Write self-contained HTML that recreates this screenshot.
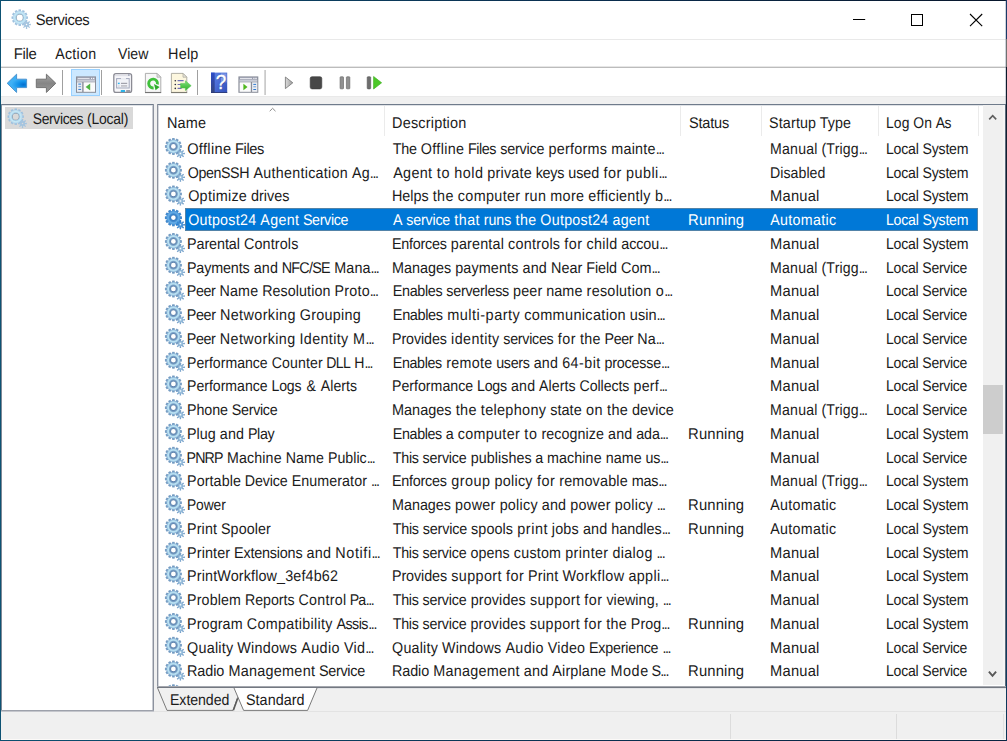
<!DOCTYPE html>
<html><head><meta charset="utf-8"><title>Services</title>
<style>
html,body{margin:0;padding:0;background:#fff;}
body{width:1007px;height:741px;position:relative;overflow:hidden;font-family:"Liberation Sans",sans-serif;font-size:15.5px;line-height:20px;}
.a{position:absolute;display:block;}
.t{position:absolute;display:block;white-space:nowrap;transform-origin:0 0;text-rendering:geometricPrecision;}
.e{letter-spacing:-1.5px;}
</style></head>
<body>
<svg width="0" height="0" style="position:absolute">
<defs>
<radialGradient id="gg" cx="9" cy="8.9" r="8.7" gradientUnits="userSpaceOnUse">
<stop offset="0.27" stop-color="#557aa6"/><stop offset="0.45" stop-color="#7aa2c8"/><stop offset="0.57" stop-color="#bce3f3"/><stop offset="0.68" stop-color="#b0d8ee"/><stop offset="0.76" stop-color="#8ab4d6"/><stop offset="0.84" stop-color="#7299c0"/><stop offset="1" stop-color="#7fa4c8"/>
</radialGradient>
<radialGradient id="ggl" cx="9" cy="8.9" r="8.6" gradientUnits="userSpaceOnUse">
<stop offset="0.37" stop-color="#76899c"/><stop offset="0.47" stop-color="#a6cde6"/><stop offset="0.6" stop-color="#c6e9f6"/><stop offset="0.76" stop-color="#b6d8ee"/><stop offset="0.85" stop-color="#9dbfdc"/><stop offset="1" stop-color="#a9c7e1"/>
</radialGradient>
<radialGradient id="gs" cx="16.0" cy="16.0" r="4.5" gradientUnits="userSpaceOnUse">
<stop offset="0.2" stop-color="#a3c8e2"/><stop offset="0.6" stop-color="#86aed2"/><stop offset="1" stop-color="#6f9bc6"/>
</radialGradient>
<symbol id="gearsel" viewBox="0 0 21 21"><path d="M18.62,15.34 L20.49,15.29 L20.49,16.71 L18.62,16.66 L18.32,17.39 L19.68,18.67 L18.67,19.68 L17.39,18.32 L16.66,18.62 L16.71,20.49 L15.29,20.49 L15.34,18.62 L14.61,18.32 L13.33,19.68 L12.32,18.67 L13.68,17.39 L13.38,16.66 L11.51,16.71 L11.51,15.29 L13.38,15.34 L13.68,14.61 L12.32,13.33 L13.33,12.32 L14.61,13.68 L15.34,13.38 L15.29,11.51 L16.71,11.51 L16.66,13.38 L17.39,13.68 L18.67,12.32 L19.68,13.33 L18.32,14.61ZM15.20,16.00 a0.8,0.8 0 1,0 1.6,0 a0.8,0.8 0 1,0 -1.6,0Z" fill="url(#gs)" fill-rule="evenodd"/><path d="M15.64,7.44 L17.52,7.72 L17.52,10.08 L15.64,10.36 L15.48,10.96 L16.97,12.13 L15.78,14.19 L14.02,13.48 L13.58,13.92 L14.29,15.68 L12.23,16.87 L11.06,15.38 L10.46,15.54 L10.18,17.42 L7.82,17.42 L7.54,15.54 L6.94,15.38 L5.77,16.87 L3.71,15.68 L4.42,13.92 L3.98,13.48 L2.22,14.19 L1.03,12.13 L2.52,10.96 L2.36,10.36 L0.48,10.08 L0.48,7.72 L2.36,7.44 L2.52,6.84 L1.03,5.67 L2.22,3.61 L3.98,4.32 L4.42,3.88 L3.71,2.12 L5.77,0.93 L6.94,2.42 L7.54,2.26 L7.82,0.38 L10.18,0.38 L10.46,2.26 L11.06,2.42 L12.23,0.93 L14.29,2.12 L13.58,3.88 L14.02,4.32 L15.78,3.61 L16.97,5.67 L15.48,6.84ZM6.60,8.90 a2.4,2.4 0 1,0 4.8,0 a2.4,2.4 0 1,0 -4.8,0Z" fill="url(#gg)" fill-rule="evenodd"/><path d="M18.62,15.34 L20.49,15.29 L20.49,16.71 L18.62,16.66 L18.32,17.39 L19.68,18.67 L18.67,19.68 L17.39,18.32 L16.66,18.62 L16.71,20.49 L15.29,20.49 L15.34,18.62 L14.61,18.32 L13.33,19.68 L12.32,18.67 L13.68,17.39 L13.38,16.66 L11.51,16.71 L11.51,15.29 L13.38,15.34 L13.68,14.61 L12.32,13.33 L13.33,12.32 L14.61,13.68 L15.34,13.38 L15.29,11.51 L16.71,11.51 L16.66,13.38 L17.39,13.68 L18.67,12.32 L19.68,13.33 L18.32,14.61ZM15.20,16.00 a0.8,0.8 0 1,0 1.6,0 a0.8,0.8 0 1,0 -1.6,0Z" fill="#0a74d8" fill-opacity=".5" fill-rule="evenodd"/><path d="M15.64,7.44 L17.52,7.72 L17.52,10.08 L15.64,10.36 L15.48,10.96 L16.97,12.13 L15.78,14.19 L14.02,13.48 L13.58,13.92 L14.29,15.68 L12.23,16.87 L11.06,15.38 L10.46,15.54 L10.18,17.42 L7.82,17.42 L7.54,15.54 L6.94,15.38 L5.77,16.87 L3.71,15.68 L4.42,13.92 L3.98,13.48 L2.22,14.19 L1.03,12.13 L2.52,10.96 L2.36,10.36 L0.48,10.08 L0.48,7.72 L2.36,7.44 L2.52,6.84 L1.03,5.67 L2.22,3.61 L3.98,4.32 L4.42,3.88 L3.71,2.12 L5.77,0.93 L6.94,2.42 L7.54,2.26 L7.82,0.38 L10.18,0.38 L10.46,2.26 L11.06,2.42 L12.23,0.93 L14.29,2.12 L13.58,3.88 L14.02,4.32 L15.78,3.61 L16.97,5.67 L15.48,6.84ZM6.60,8.90 a2.4,2.4 0 1,0 4.8,0 a2.4,2.4 0 1,0 -4.8,0Z" fill="#0a74d8" fill-opacity=".5" fill-rule="evenodd"/></symbol>
<symbol id="gearl" viewBox="0 0 21 21"><path d="M18.62,15.34 L20.49,15.29 L20.49,16.71 L18.62,16.66 L18.32,17.39 L19.68,18.67 L18.67,19.68 L17.39,18.32 L16.66,18.62 L16.71,20.49 L15.29,20.49 L15.34,18.62 L14.61,18.32 L13.33,19.68 L12.32,18.67 L13.68,17.39 L13.38,16.66 L11.51,16.71 L11.51,15.29 L13.38,15.34 L13.68,14.61 L12.32,13.33 L13.33,12.32 L14.61,13.68 L15.34,13.38 L15.29,11.51 L16.71,11.51 L16.66,13.38 L17.39,13.68 L18.67,12.32 L19.68,13.33 L18.32,14.61ZM15.20,16.00 a0.8,0.8 0 1,0 1.6,0 a0.8,0.8 0 1,0 -1.6,0Z" fill="#a4c4df" fill-rule="evenodd"/><path d="M15.64,7.44 L17.52,7.72 L17.52,10.08 L15.64,10.36 L15.48,10.96 L16.97,12.13 L15.78,14.19 L14.02,13.48 L13.58,13.92 L14.29,15.68 L12.23,16.87 L11.06,15.38 L10.46,15.54 L10.18,17.42 L7.82,17.42 L7.54,15.54 L6.94,15.38 L5.77,16.87 L3.71,15.68 L4.42,13.92 L3.98,13.48 L2.22,14.19 L1.03,12.13 L2.52,10.96 L2.36,10.36 L0.48,10.08 L0.48,7.72 L2.36,7.44 L2.52,6.84 L1.03,5.67 L2.22,3.61 L3.98,4.32 L4.42,3.88 L3.71,2.12 L5.77,0.93 L6.94,2.42 L7.54,2.26 L7.82,0.38 L10.18,0.38 L10.46,2.26 L11.06,2.42 L12.23,0.93 L14.29,2.12 L13.58,3.88 L14.02,4.32 L15.78,3.61 L16.97,5.67 L15.48,6.84ZM5.80,8.90 a3.2,3.2 0 1,0 6.4,0 a3.2,3.2 0 1,0 -6.4,0Z" fill="url(#ggl)" fill-rule="evenodd"/></symbol>
<symbol id="gear" viewBox="0 0 21 21"><path d="M18.62,15.34 L20.49,15.29 L20.49,16.71 L18.62,16.66 L18.32,17.39 L19.68,18.67 L18.67,19.68 L17.39,18.32 L16.66,18.62 L16.71,20.49 L15.29,20.49 L15.34,18.62 L14.61,18.32 L13.33,19.68 L12.32,18.67 L13.68,17.39 L13.38,16.66 L11.51,16.71 L11.51,15.29 L13.38,15.34 L13.68,14.61 L12.32,13.33 L13.33,12.32 L14.61,13.68 L15.34,13.38 L15.29,11.51 L16.71,11.51 L16.66,13.38 L17.39,13.68 L18.67,12.32 L19.68,13.33 L18.32,14.61ZM15.20,16.00 a0.8,0.8 0 1,0 1.6,0 a0.8,0.8 0 1,0 -1.6,0Z" fill="url(#gs)" fill-rule="evenodd"/><path d="M15.64,7.44 L17.52,7.72 L17.52,10.08 L15.64,10.36 L15.48,10.96 L16.97,12.13 L15.78,14.19 L14.02,13.48 L13.58,13.92 L14.29,15.68 L12.23,16.87 L11.06,15.38 L10.46,15.54 L10.18,17.42 L7.82,17.42 L7.54,15.54 L6.94,15.38 L5.77,16.87 L3.71,15.68 L4.42,13.92 L3.98,13.48 L2.22,14.19 L1.03,12.13 L2.52,10.96 L2.36,10.36 L0.48,10.08 L0.48,7.72 L2.36,7.44 L2.52,6.84 L1.03,5.67 L2.22,3.61 L3.98,4.32 L4.42,3.88 L3.71,2.12 L5.77,0.93 L6.94,2.42 L7.54,2.26 L7.82,0.38 L10.18,0.38 L10.46,2.26 L11.06,2.42 L12.23,0.93 L14.29,2.12 L13.58,3.88 L14.02,4.32 L15.78,3.61 L16.97,5.67 L15.48,6.84ZM6.60,8.90 a2.4,2.4 0 1,0 4.8,0 a2.4,2.4 0 1,0 -4.8,0Z" fill="url(#gg)" fill-rule="evenodd"/></symbol>
</defs></svg>
<!-- base fills -->
<div class="a" style="left:0;top:0;width:1007px;height:741px;background:#fff"></div>
<!-- title/menu lines -->
<div class="a" style="left:1px;top:39px;width:1005px;height:1px;background:#e9e9e9"></div>
<div class="a" style="left:1px;top:66px;width:1005px;height:1px;background:#e6e6e6"></div>
<div class="a" style="left:1px;top:67px;width:1005px;height:1px;background:#bcbcbc"></div>
<!-- gray client background below toolbar -->
<div class="a" style="left:1px;top:96px;width:1005px;height:644px;background:#f0f0f0"></div>
<div class="a" style="left:1px;top:96px;width:1005px;height:1px;background:#e9e9e9"></div>
<!-- tree panel -->
<div class="a" style="left:1px;top:104px;width:153px;height:607px;background:#fff"></div>
<div class="a" style="left:1px;top:104px;width:153px;height:1px;background:#6f7b8b"></div>
<div class="a" style="left:2px;top:105px;width:150px;height:1px;background:#dfe2e6"></div>
<div class="a" style="left:1px;top:104px;width:1px;height:607px;background:#7f8896"></div>
<div class="a" style="left:152px;top:105px;width:1px;height:606px;background:#c9ccd2"></div>
<div class="a" style="left:153px;top:104px;width:1px;height:607px;background:#8c929e"></div>
<div class="a" style="left:1px;top:710px;width:153px;height:1px;background:#9da1ab"></div>
<div class="a" style="left:1px;top:711px;width:153px;height:1px;background:#c4c6cc"></div>
<div class="a" style="left:5px;top:107px;width:128.3px;height:21.8px;background:#d9d9d9"></div>
<!-- list panel -->
<div class="a" style="left:157px;top:104px;width:849px;height:584px;background:#fff"></div>
<div class="a" style="left:157px;top:104px;width:849px;height:1px;background:#6f7b8b"></div>
<div class="a" style="left:158px;top:105px;width:847px;height:1px;background:#dfe2e6"></div>
<div class="a" style="left:157px;top:104px;width:1px;height:584px;background:#8c929e"></div>
<div class="a" style="left:158px;top:105px;width:1px;height:582px;background:#d5d8dd"></div>
<div class="a" style="left:1005px;top:104px;width:1px;height:584px;background:#5b6b7d"></div>
<div class="a" style="left:157px;top:686px;width:849px;height:1px;background:#a4a7ae"></div>
<div class="a" style="left:157px;top:687px;width:849px;height:1px;background:#737881"></div>
<div class="a" style="left:157px;top:688px;width:849px;height:1px;background:#e2e3e6"></div>
<!-- header separators -->
<div class="a" style="left:384px;top:106px;width:1px;height:30px;background:#ebebeb"></div>
<div class="a" style="left:680px;top:106px;width:1px;height:30px;background:#ebebeb"></div>
<div class="a" style="left:761px;top:106px;width:1px;height:30px;background:#ebebeb"></div>
<div class="a" style="left:878px;top:106px;width:1px;height:30px;background:#ebebeb"></div>
<div class="a" style="left:978px;top:106px;width:1px;height:30px;background:#ebebeb"></div>
<!-- sort arrow -->
<svg class="a" style="left:268px;top:106px" width="10" height="7"><path d="M1.7,5.2 L4.6,2.3 L7.5,5.2" fill="none" stroke="#8a8a8a" stroke-width="1"/></svg>
<!-- selected row -->
<div class="a" style="left:185.2px;top:208.3px;width:793.1px;height:22.5px;background:#0078d7"></div>
<div class="a" style="left:185.2px;top:208.3px;width:793.1px;height:22.5px;box-sizing:border-box;border:1px solid rgba(150,140,130,.55)"></div>
<!-- scrollbar -->
<div class="a" style="left:983px;top:105px;width:22px;height:579.6px;background:#f5f5f5"></div>
<div class="a" style="left:983px;top:105px;width:20.2px;height:579.6px;background:#f0f0f0"></div>
<div class="a" style="left:983px;top:385px;width:20.2px;height:49px;background:#cdcdcd"></div>
<svg class="a" style="left:983px;top:105px" width="21" height="580"><path d="M6.2,14.4 L9.7,10.6 L13.2,14.4" fill="none" stroke="#5e5e5e" stroke-width="1.6"/><path d="M5.9,566.7 L9.5,570.9 L13.1,566.7" fill="none" stroke="#585858" stroke-width="1.9"/></svg>
<!-- tabs -->
<svg class="a" style="left:150px;top:686px" width="200" height="28">
<path d="M7.5,2 L17,24 L83,24 L87.6,11.5 L84,2 Z" fill="#f0f0f0"/>
<path d="M84,2 L93.6,24 L157.6,24 L167,2 Z" fill="#fff"/>
<path d="M7.6,2 L17,24.4 L83,24.4 L87.8,11.2" fill="none" stroke="#7a7a7a" stroke-width="1"/>
<path d="M84,2 L93.6,24.4 L157.6,24.4 L167,2" fill="none" stroke="#7a7a7a" stroke-width="1"/>
<path d="M83.4,24.2 L87.6,12.4" fill="none" stroke="#5a5a5a" stroke-width="1.6"/>
</svg>
<!-- status bar -->
<div class="a" style="left:1px;top:711px;width:1005px;height:1px;background:#e3e3e3"></div>
<div class="a" style="left:1px;top:711px;width:153px;height:1px;background:#c4c6cc"></div>
<div class="a" style="left:730px;top:714px;width:1px;height:26px;background:#dcdcdc"></div>
<div class="a" style="left:896px;top:714px;width:1px;height:26px;background:#dcdcdc"></div>
<div class="a" style="left:1003px;top:714px;width:1px;height:26px;background:#e2e2e2"></div>
<!-- window controls -->
<svg class="a" style="left:840px;top:0" width="166" height="39">
<path d="M13,19.5 H25.2" stroke="#000" stroke-width="1"/>
<rect x="71.5" y="14.5" width="11" height="11" fill="none" stroke="#000" stroke-width="1"/>
<path d="M130,14 L142.2,26.2 M142.2,14 L130,26.2" stroke="#000" stroke-width="1.1"/>
</svg>
<!-- window border -->
<div class="a" style="left:0;top:0;width:1007px;height:1px;background:linear-gradient(90deg,#0c4f70,#0a2d4e 60%,#08162b)"></div>
<div class="a" style="left:0;top:740px;width:1007px;height:1px;background:linear-gradient(90deg,#0c4f70,#0a3050 60%,#0a2340)"></div>
<div class="a" style="left:0;top:0;width:1px;height:741px;background:#0d5273"></div>
<div class="a" style="left:1px;top:739px;width:1005px;height:1px;background:#fcfaf8"></div>
<div class="a" style="left:1006px;top:0;width:1px;height:741px;background:linear-gradient(180deg,#1b3a68 0,#1b3a68 39px,#707070 39px,#707070 67px,#0a1628 67px,#131e30 104px,#131e30 420px,#113c60 660px,#0a3558 741px)"></div>
<div class="a" style="left:1005px;top:0;width:1px;height:104px;background:rgba(60,80,110,.25)"></div>

<svg class="a" style="left:0;top:68px" width="400" height="28" viewBox="0 68 400 28">
<defs>
<radialGradient id="gb" cx="23.5" cy="84.6" r="12" gradientUnits="userSpaceOnUse" gradientTransform="translate(0 84.6) scale(1 .55) translate(0 -84.6)"><stop offset="0" stop-color="#0570cf"/><stop offset=".45" stop-color="#1292ea"/><stop offset="1" stop-color="#3eb0f5"/></radialGradient>
<linearGradient id="gf" x1="0" y1="0" x2="0" y2="1"><stop offset="0" stop-color="#a9a9a9"/><stop offset=".5" stop-color="#858585"/><stop offset="1" stop-color="#9a9a9a"/></linearGradient>
<linearGradient id="gh" x1="0" y1="0" x2="1" y2="1"><stop offset="0" stop-color="#5f82e0"/><stop offset=".45" stop-color="#4a6ed8"/><stop offset="1" stop-color="#3350b8"/></linearGradient>
<linearGradient id="ghl" x1="0" y1="0" x2="0" y2="1"><stop offset="0" stop-color="#2c4cc8"/><stop offset="1" stop-color="#36467e"/></linearGradient>
<linearGradient id="gp" x1="0" y1="0" x2="1" y2="0"><stop offset="0" stop-color="#dcdcdc"/><stop offset="1" stop-color="#9c9c9c"/></linearGradient>
<linearGradient id="gg2" x1="0" y1="0" x2="0" y2="1"><stop offset="0" stop-color="#7fe07a"/><stop offset="1" stop-color="#2fb02a"/></linearGradient>
</defs>
<!-- back / forward -->
<path d="M7.2,83.3 L16.6,74.2 L16.6,79.2 L26.6,79.2 L26.6,87.6 L16.6,87.6 L16.6,92.4 Z" fill="url(#gb)" stroke="#4a93cf" stroke-width="1" stroke-linejoin="round"/>
<path d="M55.8,83.3 L46.4,74.2 L46.4,79.2 L36.3,79.2 L36.3,87.6 L46.4,87.6 L46.4,92.4 Z" fill="url(#gf)" stroke="#727272" stroke-width="1" stroke-linejoin="round"/>
<!-- separators -->
<rect x="62" y="70" width="1" height="25" fill="#a0a0a0"/>
<rect x="101" y="70" width="1" height="25" fill="#a0a0a0"/>
<rect x="197" y="70" width="1" height="25" fill="#a0a0a0"/>
<rect x="264.3" y="70" width="1.6" height="25" fill="#c6c6c6"/>
<!-- selected button -->
<rect x="71.5" y="69.5" width="28" height="26" fill="#cce8ff" stroke="#99d1ff" stroke-width="1"/>
<!-- icon1: console tree -->
<rect x="76" y="76.4" width="20" height="16.4" fill="#8a8e99"/>
<rect x="77" y="77.3" width="18" height="2.2" fill="#9a9eb0"/>
<rect x="77.6" y="77.9" width="12" height="0.9" fill="#f4f4f8"/>
<rect x="91" y="77.8" width="1.2" height="1.2" fill="#f4f4f8"/><rect x="93" y="77.8" width="1.4" height="1.2" fill="#f4f4f8"/>
<rect x="77" y="79.5" width="18" height="2.3" fill="#c9ccd7"/>
<rect x="77" y="82.3" width="5.2" height="9.5" fill="#eceef3"/>
<rect x="78.3" y="83.6" width="2.8" height="1" fill="#2f7ad0"/><rect x="78.3" y="86.2" width="2.8" height="1" fill="#6f9fd8"/><rect x="78.3" y="88.9" width="2.8" height="1" fill="#2f7ad0"/>
<rect x="83.6" y="82.3" width="11.4" height="9.5" fill="#fbfbfb"/>
<path d="M85.6,87 L90.2,83.4 L90.2,90.6 Z" fill="#4fb344"/>
<!-- icon2: properties -->
<rect x="113.8" y="73.6" width="17.8" height="18.8" rx="2.2" fill="#f6f6f9" stroke="#8b8b94" stroke-width="1.3"/>
<rect x="115" y="74.6" width="15.4" height="1.6" fill="#e0e1e8"/>
<rect x="128" y="74.4" width="1.6" height="1.2" fill="#8890a8"/>
<rect x="116.6" y="78.6" width="12.6" height="9.4" fill="#f2f3f8" stroke="#a3a8bc" stroke-width="1"/>
<rect x="121" y="78.1" width="5" height="1.2" fill="#f2f3f8"/>
<rect x="117.9" y="82.7" width="1.8" height="1.4" fill="#2fb4f0"/>
<rect x="121" y="82.8" width="6.2" height="1.1" fill="#9a9aa4"/>
<rect x="117.9" y="85.4" width="1.8" height="1.2" fill="#d0d2dc"/>
<rect x="121" y="85.4" width="6.2" height="1.1" fill="#a8a8b0"/>
<rect x="120.8" y="90" width="4.2" height="2" fill="#2db2e6"/>
<rect x="126.2" y="90" width="4" height="2" fill="#9c9ca4"/>
<!-- icon3: refresh -->
<path d="M145.4,73.4 H157 L160.8,77.2 V92.4 H145.4 Z" fill="#f7f7f7" stroke="#a6a6a6" stroke-width=".9"/>
<path d="M157,73.4 V77.2 H160.8 Z" fill="#e2e2e2" stroke="#a6a6a6" stroke-width=".7"/>
<path d="M145,92.6 H161.2" stroke="#6e6e6e" stroke-width="1"/>
<path d="M157.4,84.4 A4.4,4.4 0 1 0 153.6,87.9" fill="none" stroke="#3fc03a" stroke-width="2.9"/>
<path d="M154,84 L159.6,87 L155.6,90.2 Z" fill="#2cab2a"/>
<!-- icon4: export -->
<path d="M171.4,73.4 H183 L186.8,77.2 V92.4 H171.4 Z" fill="#fdf7df" stroke="#a9a79c" stroke-width=".9"/>
<path d="M183,73.4 V77.2 H186.8 Z" fill="#e8e6dc" stroke="#a9a79c" stroke-width=".7"/>
<path d="M171,92.6 H187.2" stroke="#77756c" stroke-width="1"/>
<circle cx="175.3" cy="80.7" r=".8" fill="#2a2a38"/><circle cx="175.3" cy="84.5" r=".8" fill="#2a2a38"/><circle cx="175.3" cy="88.4" r=".8" fill="#2a2a38"/>
<path d="M177.6,80.7 H183.6 M177.6,84.5 H181 M177.6,88.4 H181.6" stroke="#6d6db8" stroke-width="1.2"/>
<path d="M180.6,83.4 H185.4 V80.8 L191.2,85.7 L185.4,90.5 V88 H180.6 Z" fill="url(#gg2)" stroke="#4cc048" stroke-width=".5"/>
<!-- icon5: help -->
<rect x="211" y="72.6" width="16.2" height="20.3" fill="url(#gh)"/>
<rect x="211" y="72.6" width="3.7" height="20.3" fill="url(#ghl)"/>
<rect x="221" y="73.4" width="5.6" height="9" fill="#b8c8f4" opacity=".45"/><rect x="211" y="92" width="16.2" height=".9" fill="#2c3a78"/>
<text x="221.6" y="90.2" text-anchor="middle" font-family="Liberation Sans" font-size="20.4" fill="#25357a" opacity=".55" transform="translate(221.6 0) scale(.92 1) translate(-221.6 0)">?</text><text x="220.9" y="89.5" text-anchor="middle" font-family="Liberation Sans" font-size="20.4" fill="#fff" stroke="#fff" stroke-width=".35" transform="translate(220.9 0) scale(.92 1) translate(-220.9 0)">?</text>
<!-- icon6: action pane -->
<rect x="238.4" y="76.4" width="19.9" height="16.4" fill="#8a8e99"/>
<rect x="239.4" y="77.3" width="17.9" height="2.2" fill="#9a9eb0"/>
<rect x="240" y="77.9" width="12" height="0.9" fill="#f4f4f8"/>
<rect x="253.3" y="77.8" width="1.2" height="1.2" fill="#f4f4f8"/><rect x="255.3" y="77.8" width="1.4" height="1.2" fill="#f4f4f8"/>
<rect x="239.4" y="79.5" width="17.9" height="2.3" fill="#c9ccd7"/>
<rect x="239.6" y="82.3" width="11.2" height="9.5" fill="#fbfbfb"/>
<path d="M243.4,83.7 L247.5,87 L243.4,90.3 Z" fill="#4fb720"/>
<rect x="252.1" y="82.3" width="5.2" height="9.5" fill="#eceef3"/>
<rect x="253.3" y="83.9" width="2.8" height="1" fill="#2f7ad0"/><rect x="253.3" y="86.3" width="2.8" height="1" fill="#6f9fd8"/><rect x="253.3" y="89" width="2.8" height="1" fill="#2f7ad0"/>
<!-- play/stop/pause/resume -->
<path d="M285.4,77 L292.8,82.8 L285.4,88.6 Z" fill="url(#gp)" stroke="#7d7d7d" stroke-width=".9" stroke-linejoin="round"/>
<rect x="310.2" y="76.7" width="11.6" height="12.2" rx="1.8" fill="#474747" stroke="#3a3a3a" stroke-width=".6"/>
<rect x="340.1" y="76.8" width="3.4" height="12" rx=".6" fill="#909090" stroke="#6c6c6c" stroke-width=".7"/>
<rect x="346.4" y="76.8" width="3.4" height="12" rx=".6" fill="#909090" stroke="#6c6c6c" stroke-width=".7"/>
<rect x="367.2" y="76.7" width="3.5" height="12.2" rx=".8" fill="#6d6d6d" stroke="#555" stroke-width=".6"/>
<path d="M373.6,76.5 L381.6,82.8 L373.6,89 Z" fill="#4cc828" stroke="#3fb020" stroke-width=".7" stroke-linejoin="round"/>
</svg>

<div class="a" id="listclip" style="left:158px;top:105px;width:825px;height:580.6px;overflow:hidden">
<div class="a" style="left:-158px;top:-105px;width:1007px;height:741px">
<svg class="a" style="left:164px;top:137px" width="23" height="23"><use href="#gear" x="0" y="0" width="21" height="21" transform="translate(0.41 0.57) scale(1.0000)"/></svg>
<svg class="a" style="left:164px;top:161px" width="23" height="23"><use href="#gear" x="0" y="0" width="21" height="21" transform="translate(0.41 0.32) scale(1.0000)"/></svg>
<svg class="a" style="left:164px;top:185px" width="23" height="23"><use href="#gear" x="0" y="0" width="21" height="21" transform="translate(0.41 0.07) scale(1.0000)"/></svg>
<svg class="a" style="left:164px;top:208px" width="23" height="23"><use href="#gearsel" x="0" y="0" width="21" height="21" transform="translate(0.41 0.82) scale(1.0000)"/></svg>
<svg class="a" style="left:164px;top:232px" width="23" height="23"><use href="#gear" x="0" y="0" width="21" height="21" transform="translate(0.41 0.57) scale(1.0000)"/></svg>
<svg class="a" style="left:164px;top:256px" width="23" height="23"><use href="#gear" x="0" y="0" width="21" height="21" transform="translate(0.41 0.32) scale(1.0000)"/></svg>
<svg class="a" style="left:164px;top:280px" width="23" height="23"><use href="#gear" x="0" y="0" width="21" height="21" transform="translate(0.41 0.07) scale(1.0000)"/></svg>
<svg class="a" style="left:164px;top:303px" width="23" height="23"><use href="#gear" x="0" y="0" width="21" height="21" transform="translate(0.41 0.82) scale(1.0000)"/></svg>
<svg class="a" style="left:164px;top:327px" width="23" height="23"><use href="#gear" x="0" y="0" width="21" height="21" transform="translate(0.41 0.57) scale(1.0000)"/></svg>
<svg class="a" style="left:164px;top:351px" width="23" height="23"><use href="#gear" x="0" y="0" width="21" height="21" transform="translate(0.41 0.32) scale(1.0000)"/></svg>
<svg class="a" style="left:164px;top:375px" width="23" height="23"><use href="#gear" x="0" y="0" width="21" height="21" transform="translate(0.41 0.07) scale(1.0000)"/></svg>
<svg class="a" style="left:164px;top:398px" width="23" height="23"><use href="#gear" x="0" y="0" width="21" height="21" transform="translate(0.41 0.82) scale(1.0000)"/></svg>
<svg class="a" style="left:164px;top:422px" width="23" height="23"><use href="#gear" x="0" y="0" width="21" height="21" transform="translate(0.41 0.57) scale(1.0000)"/></svg>
<svg class="a" style="left:164px;top:446px" width="23" height="23"><use href="#gear" x="0" y="0" width="21" height="21" transform="translate(0.41 0.32) scale(1.0000)"/></svg>
<svg class="a" style="left:164px;top:470px" width="23" height="23"><use href="#gear" x="0" y="0" width="21" height="21" transform="translate(0.41 0.07) scale(1.0000)"/></svg>
<svg class="a" style="left:164px;top:493px" width="23" height="23"><use href="#gear" x="0" y="0" width="21" height="21" transform="translate(0.41 0.82) scale(1.0000)"/></svg>
<svg class="a" style="left:164px;top:517px" width="23" height="23"><use href="#gear" x="0" y="0" width="21" height="21" transform="translate(0.41 0.57) scale(1.0000)"/></svg>
<svg class="a" style="left:164px;top:541px" width="23" height="23"><use href="#gear" x="0" y="0" width="21" height="21" transform="translate(0.41 0.32) scale(1.0000)"/></svg>
<svg class="a" style="left:164px;top:565px" width="23" height="23"><use href="#gear" x="0" y="0" width="21" height="21" transform="translate(0.41 0.07) scale(1.0000)"/></svg>
<svg class="a" style="left:164px;top:588px" width="23" height="23"><use href="#gear" x="0" y="0" width="21" height="21" transform="translate(0.41 0.82) scale(1.0000)"/></svg>
<svg class="a" style="left:164px;top:612px" width="23" height="23"><use href="#gear" x="0" y="0" width="21" height="21" transform="translate(0.41 0.57) scale(1.0000)"/></svg>
<svg class="a" style="left:164px;top:636px" width="23" height="23"><use href="#gear" x="0" y="0" width="21" height="21" transform="translate(0.41 0.32) scale(1.0000)"/></svg>
<svg class="a" style="left:164px;top:660px" width="23" height="23"><use href="#gear" x="0" y="0" width="21" height="21" transform="translate(0.41 0.07) scale(1.0000)"/></svg>
<svg class="a" style="left:164px;top:683px" width="23" height="23"><use href="#gear" x="0" y="0" width="21" height="21" transform="translate(0.41 0.82) scale(1.0000)"/></svg>
</div></div>
<svg class="a" style="left:11px;top:9px" width="23" height="23"><use href="#gearl" x="0" y="0" width="21" height="21" transform="translate(0.00 0.00) scale(0.9714)"/></svg>
<svg class="a" style="left:7px;top:108px" width="23" height="23"><use href="#gearl" x="0" y="0" width="21" height="21" transform="translate(0.00 0.00) scale(0.9714)"/></svg>
<span class="t" style="left:35.93px;top:11.20px;color:#1b1b1b;transform:scaleX(0.9518)"><span style="letter-spacing:-0.42px;margin:0 0.21px 0 -0.21px">Services</span></span>
<span class="t" style="left:13.56px;top:44.90px;color:#1b1b1b;transform:scaleX(0.9576)"><span style="letter-spacing:-0.31px;margin:0 0.16px 0 -0.16px">File</span></span>
<span class="t" style="left:55.49px;top:44.90px;color:#1b1b1b;transform:scaleX(0.9169)"><span style="letter-spacing:0.33px;margin:0 -0.17px 0 0.17px">Action</span></span>
<span class="t" style="left:117.50px;top:44.90px;color:#1b1b1b;transform:scaleX(0.9107)"><span style="letter-spacing:0.03px;margin:0 -0.02px 0 0.02px">View</span></span>
<span class="t" style="left:167.79px;top:44.90px;color:#1b1b1b;transform:scaleX(0.9290)"><span style="letter-spacing:0.22px;margin:0 -0.11px 0 0.11px">Help</span></span>
<span class="t" style="left:33.12px;top:109.60px;color:#1b1b1b;transform:scaleX(0.8979)"><span style="letter-spacing:-0.42px;margin:0 0.21px 0 -0.21px">Services</span> <span style="letter-spacing:-0.25px;margin:0 0.13px 0 -0.13px">(Local)</span></span>
<span class="t" style="left:167.25px;top:113.60px;color:#1b1b1b;transform:scaleX(0.9315)"><span style="letter-spacing:0.15px;margin:0 -0.07px 0 0.07px">Name</span></span>
<span class="t" style="left:392.29px;top:113.60px;color:#1b1b1b;transform:scaleX(0.9324)"><span style="letter-spacing:0.20px;margin:0 -0.10px 0 0.10px">Description</span></span>
<span class="t" style="left:688.55px;top:113.60px;color:#1b1b1b;transform:scaleX(0.9355)"><span style="letter-spacing:-0.16px;margin:0 0.08px 0 -0.08px">Status</span></span>
<span class="t" style="left:769.06px;top:113.60px;color:#1b1b1b;transform:scaleX(0.9223)"><span style="letter-spacing:0.16px;margin:0 -0.08px 0 0.08px">Startup</span> <span style="letter-spacing:0.00px;margin:0 -0.00px 0 0.00px">Type</span></span>
<span class="t" style="left:886.36px;top:113.60px;color:#1b1b1b;transform:scaleX(0.8967)"><span style="letter-spacing:0.08px;margin:0 -0.04px 0 0.04px">Log</span> <span style="letter-spacing:0.14px;margin:0 -0.07px 0 0.07px">On</span> <span style="letter-spacing:-0.56px;margin:0 0.28px 0 -0.28px">As</span></span>
<span class="t" style="left:170.34px;top:691.20px;color:#1b1b1b;transform:scaleX(0.9134)"><span style="letter-spacing:-0.07px;margin:0 0.03px 0 -0.03px">Extended</span></span>
<span class="t" style="left:246.06px;top:691.20px;color:#1b1b1b;transform:scaleX(0.9260)"><span style="letter-spacing:0.03px;margin:0 -0.01px 0 0.01px">Standard</span></span>
<span class="t" style="left:187.49px;top:139.90px;color:#1b1b1b;transform:scaleX(0.9428)"><span style="letter-spacing:0.34px;margin:0 -0.17px 0 0.17px">Offline</span> <span style="letter-spacing:-0.45px;margin:0 0.23px 0 -0.23px">Files</span></span>
<span class="t" style="left:393.25px;top:139.90px;color:#1b1b1b;transform:scaleX(0.9255)"><span style="letter-spacing:-0.37px;margin:0 0.18px 0 -0.18px">The</span> <span style="letter-spacing:0.34px;margin:0 -0.17px 0 0.17px">Offline</span> <span style="letter-spacing:-0.45px;margin:0 0.23px 0 -0.23px">Files</span> <span style="letter-spacing:-0.21px;margin:0 0.10px 0 -0.10px">service</span> <span style="letter-spacing:0.28px;margin:0 -0.14px 0 0.14px">performs</span> <span style="letter-spacing:0.29px;margin:0 -0.14px 0 0.14px">mainte</span><span class="e">...</span></span>
<span class="t" style="left:770.35px;top:139.90px;color:#1b1b1b;transform:scaleX(0.9091)"><span style="letter-spacing:0.23px;margin:0 -0.11px 0 0.11px">Manual</span> <span style="letter-spacing:0.21px;margin:0 -0.10px 0 0.10px">(Trigg</span><span class="e">...</span></span>
<span class="t" style="left:886.33px;top:139.90px;color:#1b1b1b;transform:scaleX(0.9095)"><span style="letter-spacing:-0.21px;margin:0 0.10px 0 -0.10px">Local</span> <span style="letter-spacing:-0.25px;margin:0 0.12px 0 -0.12px">System</span></span>
<span class="t" style="left:188.03px;top:163.65px;color:#1b1b1b;transform:scaleX(0.9188)"><span style="letter-spacing:-0.44px;margin:0 0.22px 0 -0.22px">OpenSSH</span> <span style="letter-spacing:0.34px;margin:0 -0.17px 0 0.17px">Authentication</span> <span style="letter-spacing:0.31px;margin:0 -0.15px 0 0.15px">Ag</span><span class="e">...</span></span>
<span class="t" style="left:393.00px;top:163.65px;color:#1b1b1b;transform:scaleX(0.9291)"><span style="letter-spacing:0.35px;margin:0 -0.17px 0 0.17px">Agent</span> <span style="letter-spacing:0.88px;margin:0 -0.44px 0 0.44px">to</span> <span style="letter-spacing:0.54px;margin:0 -0.27px 0 0.27px">hold</span> <span style="letter-spacing:0.22px;margin:0 -0.11px 0 0.11px">private</span> <span style="letter-spacing:-0.32px;margin:0 0.16px 0 -0.16px">keys</span> <span style="letter-spacing:-0.06px;margin:0 0.03px 0 -0.03px">used</span> <span style="letter-spacing:0.57px;margin:0 -0.28px 0 0.28px">for</span> <span style="letter-spacing:0.52px;margin:0 -0.26px 0 0.26px">publi</span><span class="e">...</span></span>
<span class="t" style="left:770.34px;top:163.65px;color:#1b1b1b;transform:scaleX(0.9135)"><span style="letter-spacing:0.04px;margin:0 -0.02px 0 0.02px">Disabled</span></span>
<span class="t" style="left:886.33px;top:163.65px;color:#1b1b1b;transform:scaleX(0.9095)"><span style="letter-spacing:-0.21px;margin:0 0.10px 0 -0.10px">Local</span> <span style="letter-spacing:-0.25px;margin:0 0.12px 0 -0.12px">System</span></span>
<span class="t" style="left:187.55px;top:187.40px;color:#1b1b1b;transform:scaleX(0.9287)"><span style="letter-spacing:0.30px;margin:0 -0.15px 0 0.15px">Optimize</span> <span style="letter-spacing:-0.00px;margin:0 0.00px 0 -0.00px">drives</span></span>
<span class="t" style="left:392.30px;top:187.40px;color:#1b1b1b;transform:scaleX(0.9261)"><span style="letter-spacing:-0.03px;margin:0 0.01px 0 -0.01px">Helps</span> <span style="letter-spacing:0.37px;margin:0 -0.19px 0 0.19px">the</span> <span style="letter-spacing:0.40px;margin:0 -0.20px 0 0.20px">computer</span> <span style="letter-spacing:0.36px;margin:0 -0.18px 0 0.18px">run</span> <span style="letter-spacing:0.37px;margin:0 -0.19px 0 0.19px">more</span> <span style="letter-spacing:0.28px;margin:0 -0.14px 0 0.14px">efficiently</span> <span style="letter-spacing:0.71px;margin:0 -0.36px 0 0.36px">b</span><span class="e">...</span></span>
<span class="t" style="left:770.20px;top:187.40px;color:#1b1b1b;transform:scaleX(0.9474)"><span style="letter-spacing:0.23px;margin:0 -0.11px 0 0.11px">Manual</span></span>
<span class="t" style="left:886.33px;top:187.40px;color:#1b1b1b;transform:scaleX(0.9095)"><span style="letter-spacing:-0.21px;margin:0 0.10px 0 -0.10px">Local</span> <span style="letter-spacing:-0.25px;margin:0 0.12px 0 -0.12px">System</span></span>
<span class="t" style="left:187.60px;top:211.15px;color:#fff;transform:scaleX(0.9193)"><span style="letter-spacing:0.30px;margin:0 -0.15px 0 0.15px">Outpost24</span> <span style="letter-spacing:0.35px;margin:0 -0.17px 0 0.17px">Agent</span> <span style="letter-spacing:-0.34px;margin:0 0.17px 0 -0.17px">Service</span></span>
<span class="t" style="left:393.15px;top:211.15px;color:#fff;transform:scaleX(0.9190)"><span style="letter-spacing:-0.10px;margin:0 0.05px 0 -0.05px">A</span> <span style="letter-spacing:-0.21px;margin:0 0.10px 0 -0.10px">service</span> <span style="letter-spacing:0.49px;margin:0 -0.25px 0 0.25px">that</span> <span style="letter-spacing:0.02px;margin:0 -0.01px 0 0.01px">runs</span> <span style="letter-spacing:0.37px;margin:0 -0.19px 0 0.19px">the</span> <span style="letter-spacing:0.30px;margin:0 -0.15px 0 0.15px">Outpost24</span> <span style="letter-spacing:0.26px;margin:0 -0.13px 0 0.13px">agent</span></span>
<span class="t" style="left:688.20px;top:211.15px;color:#fff;transform:scaleX(0.9585)"><span style="letter-spacing:0.13px;margin:0 -0.06px 0 0.06px">Running</span></span>
<span class="t" style="left:770.01px;top:211.15px;color:#fff;transform:scaleX(0.9173)"><span style="letter-spacing:0.37px;margin:0 -0.18px 0 0.18px">Automatic</span></span>
<span class="t" style="left:886.33px;top:211.15px;color:#fff;transform:scaleX(0.9095)"><span style="letter-spacing:-0.21px;margin:0 0.10px 0 -0.10px">Local</span> <span style="letter-spacing:-0.25px;margin:0 0.12px 0 -0.12px">System</span></span>
<span class="t" style="left:187.33px;top:234.90px;color:#1b1b1b;transform:scaleX(0.9260)"><span style="letter-spacing:-0.08px;margin:0 0.04px 0 -0.04px">Parental</span> <span style="letter-spacing:0.15px;margin:0 -0.07px 0 0.07px">Controls</span></span>
<span class="t" style="left:392.33px;top:234.90px;color:#1b1b1b;transform:scaleX(0.9252)"><span style="letter-spacing:-0.25px;margin:0 0.13px 0 -0.13px">Enforces</span> <span style="letter-spacing:0.19px;margin:0 -0.09px 0 0.09px">parental</span> <span style="letter-spacing:0.26px;margin:0 -0.13px 0 0.13px">controls</span> <span style="letter-spacing:0.57px;margin:0 -0.28px 0 0.28px">for</span> <span style="letter-spacing:0.29px;margin:0 -0.15px 0 0.15px">child</span> <span style="letter-spacing:-0.07px;margin:0 0.03px 0 -0.03px">accou</span><span class="e">...</span></span>
<span class="t" style="left:770.20px;top:234.90px;color:#1b1b1b;transform:scaleX(0.9474)"><span style="letter-spacing:0.23px;margin:0 -0.11px 0 0.11px">Manual</span></span>
<span class="t" style="left:886.33px;top:234.90px;color:#1b1b1b;transform:scaleX(0.9095)"><span style="letter-spacing:-0.21px;margin:0 0.10px 0 -0.10px">Local</span> <span style="letter-spacing:-0.25px;margin:0 0.12px 0 -0.12px">System</span></span>
<span class="t" style="left:187.33px;top:258.65px;color:#1b1b1b;transform:scaleX(0.9246)"><span style="letter-spacing:-0.15px;margin:0 0.08px 0 -0.08px">Payments</span> <span style="letter-spacing:0.18px;margin:0 -0.09px 0 0.09px">and</span> <span style="letter-spacing:-0.79px;margin:0 0.40px 0 -0.40px">NFC/SE</span> <span style="letter-spacing:0.15px;margin:0 -0.08px 0 0.08px">Mana</span><span class="e">...</span></span>
<span class="t" style="left:392.33px;top:258.65px;color:#1b1b1b;transform:scaleX(0.9281)"><span style="letter-spacing:-0.00px;margin:0 0.00px 0 -0.00px">Manages</span> <span style="letter-spacing:0.12px;margin:0 -0.06px 0 0.06px">payments</span> <span style="letter-spacing:0.18px;margin:0 -0.09px 0 0.09px">and</span> <span style="letter-spacing:0.04px;margin:0 -0.02px 0 0.02px">Near</span> <span style="letter-spacing:-0.10px;margin:0 0.05px 0 -0.05px">Field</span> <span style="letter-spacing:0.03px;margin:0 -0.01px 0 0.01px">Com</span><span class="e">...</span></span>
<span class="t" style="left:770.35px;top:258.65px;color:#1b1b1b;transform:scaleX(0.9091)"><span style="letter-spacing:0.23px;margin:0 -0.11px 0 0.11px">Manual</span> <span style="letter-spacing:0.21px;margin:0 -0.10px 0 0.10px">(Trigg</span><span class="e">...</span></span>
<span class="t" style="left:886.34px;top:258.65px;color:#1b1b1b;transform:scaleX(0.9047)"><span style="letter-spacing:-0.21px;margin:0 0.10px 0 -0.10px">Local</span> <span style="letter-spacing:-0.34px;margin:0 0.17px 0 -0.17px">Service</span></span>
<span class="t" style="left:186.71px;top:282.40px;color:#1b1b1b;transform:scaleX(0.9208)"><span style="letter-spacing:-0.43px;margin:0 0.22px 0 -0.22px">Peer</span> <span style="letter-spacing:0.15px;margin:0 -0.07px 0 0.07px">Name</span> <span style="letter-spacing:0.09px;margin:0 -0.05px 0 0.05px">Resolution</span> <span style="letter-spacing:0.27px;margin:0 -0.13px 0 0.13px">Proto</span><span class="e">...</span></span>
<span class="t" style="left:392.70px;top:282.40px;color:#1b1b1b;transform:scaleX(0.9268)"><span style="letter-spacing:-0.39px;margin:0 0.19px 0 -0.19px">Enables</span> <span style="letter-spacing:-0.30px;margin:0 0.15px 0 -0.15px">serverless</span> <span style="letter-spacing:0.11px;margin:0 -0.05px 0 0.05px">peer</span> <span style="letter-spacing:0.07px;margin:0 -0.03px 0 0.03px">name</span> <span style="letter-spacing:0.30px;margin:0 -0.15px 0 0.15px">resolution</span> <span style="letter-spacing:0.68px;margin:0 -0.34px 0 0.34px">o</span><span class="e">...</span></span>
<span class="t" style="left:770.20px;top:282.40px;color:#1b1b1b;transform:scaleX(0.9474)"><span style="letter-spacing:0.23px;margin:0 -0.11px 0 0.11px">Manual</span></span>
<span class="t" style="left:886.34px;top:282.40px;color:#1b1b1b;transform:scaleX(0.9047)"><span style="letter-spacing:-0.21px;margin:0 0.10px 0 -0.10px">Local</span> <span style="letter-spacing:-0.34px;margin:0 0.17px 0 -0.17px">Service</span></span>
<span class="t" style="left:186.66px;top:306.15px;color:#1b1b1b;transform:scaleX(0.9267)"><span style="letter-spacing:-0.43px;margin:0 0.22px 0 -0.22px">Peer</span> <span style="letter-spacing:0.43px;margin:0 -0.22px 0 0.22px">Networking</span> <span style="letter-spacing:0.30px;margin:0 -0.15px 0 0.15px">Grouping</span></span>
<span class="t" style="left:392.66px;top:306.15px;color:#1b1b1b;transform:scaleX(0.9363)"><span style="letter-spacing:-0.39px;margin:0 0.19px 0 -0.19px">Enables</span> <span style="letter-spacing:0.52px;margin:0 -0.26px 0 0.26px">multi-party</span> <span style="letter-spacing:0.34px;margin:0 -0.17px 0 0.17px">communication</span> <span style="letter-spacing:0.03px;margin:0 -0.01px 0 0.01px">usin</span><span class="e">...</span></span>
<span class="t" style="left:770.20px;top:306.15px;color:#1b1b1b;transform:scaleX(0.9474)"><span style="letter-spacing:0.23px;margin:0 -0.11px 0 0.11px">Manual</span></span>
<span class="t" style="left:886.34px;top:306.15px;color:#1b1b1b;transform:scaleX(0.9047)"><span style="letter-spacing:-0.21px;margin:0 0.10px 0 -0.10px">Local</span> <span style="letter-spacing:-0.34px;margin:0 0.17px 0 -0.17px">Service</span></span>
<span class="t" style="left:186.67px;top:329.90px;color:#1b1b1b;transform:scaleX(0.9242)"><span style="letter-spacing:-0.43px;margin:0 0.22px 0 -0.22px">Peer</span> <span style="letter-spacing:0.43px;margin:0 -0.22px 0 0.22px">Networking</span> <span style="letter-spacing:0.39px;margin:0 -0.20px 0 0.20px">Identity</span> <span style="letter-spacing:1.34px;margin:0 -0.67px 0 0.67px">M</span><span class="e">...</span></span>
<span class="t" style="left:392.33px;top:329.90px;color:#1b1b1b;transform:scaleX(0.9223)"><span style="letter-spacing:-0.10px;margin:0 0.05px 0 -0.05px">Provides</span> <span style="letter-spacing:0.45px;margin:0 -0.23px 0 0.23px">identity</span> <span style="letter-spacing:-0.31px;margin:0 0.15px 0 -0.15px">services</span> <span style="letter-spacing:0.57px;margin:0 -0.28px 0 0.28px">for</span> <span style="letter-spacing:0.37px;margin:0 -0.19px 0 0.19px">the</span> <span style="letter-spacing:-0.43px;margin:0 0.22px 0 -0.22px">Peer</span> <span style="letter-spacing:0.07px;margin:0 -0.03px 0 0.03px">Na</span><span class="e">...</span></span>
<span class="t" style="left:770.20px;top:329.90px;color:#1b1b1b;transform:scaleX(0.9474)"><span style="letter-spacing:0.23px;margin:0 -0.11px 0 0.11px">Manual</span></span>
<span class="t" style="left:886.34px;top:329.90px;color:#1b1b1b;transform:scaleX(0.9047)"><span style="letter-spacing:-0.21px;margin:0 0.10px 0 -0.10px">Local</span> <span style="letter-spacing:-0.34px;margin:0 0.17px 0 -0.17px">Service</span></span>
<span class="t" style="left:187.35px;top:353.65px;color:#1b1b1b;transform:scaleX(0.9084)"><span style="letter-spacing:0.01px;margin:0 -0.01px 0 0.01px">Performance</span> <span style="letter-spacing:0.16px;margin:0 -0.08px 0 0.08px">Counter</span> <span style="letter-spacing:-0.79px;margin:0 0.39px 0 -0.39px">DLL</span> <span style="letter-spacing:0.08px;margin:0 -0.04px 0 0.04px">H</span><span class="e">...</span></span>
<span class="t" style="left:392.71px;top:353.65px;color:#1b1b1b;transform:scaleX(0.9195)"><span style="letter-spacing:-0.39px;margin:0 0.19px 0 -0.19px">Enables</span> <span style="letter-spacing:0.37px;margin:0 -0.19px 0 0.19px">remote</span> <span style="letter-spacing:-0.33px;margin:0 0.16px 0 -0.16px">users</span> <span style="letter-spacing:0.18px;margin:0 -0.09px 0 0.09px">and</span> <span style="letter-spacing:0.54px;margin:0 -0.27px 0 0.27px">64-bit</span> <span style="letter-spacing:-0.17px;margin:0 0.08px 0 -0.08px">processe</span><span class="e">...</span></span>
<span class="t" style="left:770.20px;top:353.65px;color:#1b1b1b;transform:scaleX(0.9474)"><span style="letter-spacing:0.23px;margin:0 -0.11px 0 0.11px">Manual</span></span>
<span class="t" style="left:886.34px;top:353.65px;color:#1b1b1b;transform:scaleX(0.9047)"><span style="letter-spacing:-0.21px;margin:0 0.10px 0 -0.10px">Local</span> <span style="letter-spacing:-0.34px;margin:0 0.17px 0 -0.17px">Service</span></span>
<span class="t" style="left:187.34px;top:377.40px;color:#1b1b1b;transform:scaleX(0.9078)"><span style="letter-spacing:0.01px;margin:0 -0.01px 0 0.01px">Performance</span> <span style="letter-spacing:-0.19px;margin:0 0.10px 0 -0.10px">Logs</span> <span style="letter-spacing:2.36px;margin:0 -1.18px 0 1.18px">&amp;</span> <span style="letter-spacing:0.07px;margin:0 -0.03px 0 0.03px">Alerts</span></span>
<span class="t" style="left:392.35px;top:377.40px;color:#1b1b1b;transform:scaleX(0.9130)"><span style="letter-spacing:0.01px;margin:0 -0.01px 0 0.01px">Performance</span> <span style="letter-spacing:-0.19px;margin:0 0.10px 0 -0.10px">Logs</span> <span style="letter-spacing:0.18px;margin:0 -0.09px 0 0.09px">and</span> <span style="letter-spacing:0.07px;margin:0 -0.03px 0 0.03px">Alerts</span> <span style="letter-spacing:-0.07px;margin:0 0.04px 0 -0.04px">Collects</span> <span style="letter-spacing:0.35px;margin:0 -0.18px 0 0.18px">perf</span><span class="e">...</span></span>
<span class="t" style="left:770.20px;top:377.40px;color:#1b1b1b;transform:scaleX(0.9474)"><span style="letter-spacing:0.23px;margin:0 -0.11px 0 0.11px">Manual</span></span>
<span class="t" style="left:886.34px;top:377.40px;color:#1b1b1b;transform:scaleX(0.9047)"><span style="letter-spacing:-0.21px;margin:0 0.10px 0 -0.10px">Local</span> <span style="letter-spacing:-0.34px;margin:0 0.17px 0 -0.17px">Service</span></span>
<span class="t" style="left:187.34px;top:401.15px;color:#1b1b1b;transform:scaleX(0.9223)"><span style="letter-spacing:-0.07px;margin:0 0.04px 0 -0.04px">Phone</span> <span style="letter-spacing:-0.34px;margin:0 0.17px 0 -0.17px">Service</span></span>
<span class="t" style="left:392.28px;top:401.15px;color:#1b1b1b;transform:scaleX(0.9332)"><span style="letter-spacing:-0.00px;margin:0 0.00px 0 -0.00px">Manages</span> <span style="letter-spacing:0.37px;margin:0 -0.19px 0 0.19px">the</span> <span style="letter-spacing:0.32px;margin:0 -0.16px 0 0.16px">telephony</span> <span style="letter-spacing:0.05px;margin:0 -0.03px 0 0.03px">state</span> <span style="letter-spacing:0.52px;margin:0 -0.26px 0 0.26px">on</span> <span style="letter-spacing:0.37px;margin:0 -0.19px 0 0.19px">the</span> <span style="letter-spacing:-0.01px;margin:0 0.01px 0 -0.01px">device</span></span>
<span class="t" style="left:770.35px;top:401.15px;color:#1b1b1b;transform:scaleX(0.9091)"><span style="letter-spacing:0.23px;margin:0 -0.11px 0 0.11px">Manual</span> <span style="letter-spacing:0.21px;margin:0 -0.10px 0 0.10px">(Trigg</span><span class="e">...</span></span>
<span class="t" style="left:886.34px;top:401.15px;color:#1b1b1b;transform:scaleX(0.9047)"><span style="letter-spacing:-0.21px;margin:0 0.10px 0 -0.10px">Local</span> <span style="letter-spacing:-0.34px;margin:0 0.17px 0 -0.17px">Service</span></span>
<span class="t" style="left:187.33px;top:424.90px;color:#1b1b1b;transform:scaleX(0.9243)"><span style="letter-spacing:0.01px;margin:0 -0.01px 0 0.01px">Plug</span> <span style="letter-spacing:0.18px;margin:0 -0.09px 0 0.09px">and</span> <span style="letter-spacing:-0.42px;margin:0 0.21px 0 -0.21px">Play</span></span>
<span class="t" style="left:392.71px;top:424.90px;color:#1b1b1b;transform:scaleX(0.9206)"><span style="letter-spacing:-0.39px;margin:0 0.19px 0 -0.19px">Enables</span> <span style="letter-spacing:-0.54px;margin:0 0.27px 0 -0.27px">a</span> <span style="letter-spacing:0.40px;margin:0 -0.20px 0 0.20px">computer</span> <span style="letter-spacing:0.88px;margin:0 -0.44px 0 0.44px">to</span> <span style="letter-spacing:0.10px;margin:0 -0.05px 0 0.05px">recognize</span> <span style="letter-spacing:0.18px;margin:0 -0.09px 0 0.09px">and</span> <span style="letter-spacing:-0.12px;margin:0 0.06px 0 -0.06px">ada</span><span class="e">...</span></span>
<span class="t" style="left:688.20px;top:424.90px;color:#1b1b1b;transform:scaleX(0.9585)"><span style="letter-spacing:0.13px;margin:0 -0.06px 0 0.06px">Running</span></span>
<span class="t" style="left:770.20px;top:424.90px;color:#1b1b1b;transform:scaleX(0.9474)"><span style="letter-spacing:0.23px;margin:0 -0.11px 0 0.11px">Manual</span></span>
<span class="t" style="left:886.33px;top:424.90px;color:#1b1b1b;transform:scaleX(0.9095)"><span style="letter-spacing:-0.21px;margin:0 0.10px 0 -0.10px">Local</span> <span style="letter-spacing:-0.25px;margin:0 0.12px 0 -0.12px">System</span></span>
<span class="t" style="left:187.44px;top:448.65px;color:#1b1b1b;transform:scaleX(0.9164)"><span style="letter-spacing:-0.97px;margin:0 0.49px 0 -0.49px">PNRP</span> <span style="letter-spacing:0.17px;margin:0 -0.08px 0 0.08px">Machine</span> <span style="letter-spacing:0.15px;margin:0 -0.07px 0 0.07px">Name</span> <span style="letter-spacing:0.00px;margin:0 -0.00px 0 0.00px">Public</span><span class="e">...</span></span>
<span class="t" style="left:393.26px;top:448.65px;color:#1b1b1b;transform:scaleX(0.9224)"><span style="letter-spacing:-0.35px;margin:0 0.18px 0 -0.18px">This</span> <span style="letter-spacing:-0.21px;margin:0 0.10px 0 -0.10px">service</span> <span style="letter-spacing:0.07px;margin:0 -0.03px 0 0.03px">publishes</span> <span style="letter-spacing:-0.54px;margin:0 0.27px 0 -0.27px">a</span> <span style="letter-spacing:0.09px;margin:0 -0.04px 0 0.04px">machine</span> <span style="letter-spacing:0.07px;margin:0 -0.03px 0 0.03px">name</span> <span style="letter-spacing:-0.33px;margin:0 0.16px 0 -0.16px">us</span><span class="e">...</span></span>
<span class="t" style="left:770.20px;top:448.65px;color:#1b1b1b;transform:scaleX(0.9474)"><span style="letter-spacing:0.23px;margin:0 -0.11px 0 0.11px">Manual</span></span>
<span class="t" style="left:886.34px;top:448.65px;color:#1b1b1b;transform:scaleX(0.9047)"><span style="letter-spacing:-0.21px;margin:0 0.10px 0 -0.10px">Local</span> <span style="letter-spacing:-0.34px;margin:0 0.17px 0 -0.17px">Service</span></span>
<span class="t" style="left:187.34px;top:472.40px;color:#1b1b1b;transform:scaleX(0.9201)"><span style="letter-spacing:0.11px;margin:0 -0.06px 0 0.06px">Portable</span> <span style="letter-spacing:-0.14px;margin:0 0.07px 0 -0.07px">Device</span> <span style="letter-spacing:0.08px;margin:0 -0.04px 0 0.04px">Enumerator</span> <span class="e">...</span></span>
<span class="t" style="left:392.32px;top:472.40px;color:#1b1b1b;transform:scaleX(0.9281)"><span style="letter-spacing:-0.25px;margin:0 0.13px 0 -0.13px">Enforces</span> <span style="letter-spacing:0.57px;margin:0 -0.28px 0 0.28px">group</span> <span style="letter-spacing:0.28px;margin:0 -0.14px 0 0.14px">policy</span> <span style="letter-spacing:0.57px;margin:0 -0.28px 0 0.28px">for</span> <span style="letter-spacing:0.18px;margin:0 -0.09px 0 0.09px">removable</span> <span style="letter-spacing:-0.26px;margin:0 0.13px 0 -0.13px">mas</span><span class="e">...</span></span>
<span class="t" style="left:770.35px;top:472.40px;color:#1b1b1b;transform:scaleX(0.9091)"><span style="letter-spacing:0.23px;margin:0 -0.11px 0 0.11px">Manual</span> <span style="letter-spacing:0.21px;margin:0 -0.10px 0 0.10px">(Trigg</span><span class="e">...</span></span>
<span class="t" style="left:886.33px;top:472.40px;color:#1b1b1b;transform:scaleX(0.9095)"><span style="letter-spacing:-0.21px;margin:0 0.10px 0 -0.10px">Local</span> <span style="letter-spacing:-0.25px;margin:0 0.12px 0 -0.12px">System</span></span>
<span class="t" style="left:187.38px;top:496.15px;color:#1b1b1b;transform:scaleX(0.8905)"><span style="letter-spacing:-0.10px;margin:0 0.05px 0 -0.05px">Power</span></span>
<span class="t" style="left:392.32px;top:496.15px;color:#1b1b1b;transform:scaleX(0.9247)"><span style="letter-spacing:-0.00px;margin:0 0.00px 0 -0.00px">Manages</span> <span style="letter-spacing:0.33px;margin:0 -0.17px 0 0.17px">power</span> <span style="letter-spacing:0.28px;margin:0 -0.14px 0 0.14px">policy</span> <span style="letter-spacing:0.18px;margin:0 -0.09px 0 0.09px">and</span> <span style="letter-spacing:0.33px;margin:0 -0.17px 0 0.17px">power</span> <span style="letter-spacing:0.28px;margin:0 -0.14px 0 0.14px">policy</span> <span class="e">...</span></span>
<span class="t" style="left:688.20px;top:496.15px;color:#1b1b1b;transform:scaleX(0.9585)"><span style="letter-spacing:0.13px;margin:0 -0.06px 0 0.06px">Running</span></span>
<span class="t" style="left:770.01px;top:496.15px;color:#1b1b1b;transform:scaleX(0.9173)"><span style="letter-spacing:0.37px;margin:0 -0.18px 0 0.18px">Automatic</span></span>
<span class="t" style="left:886.33px;top:496.15px;color:#1b1b1b;transform:scaleX(0.9095)"><span style="letter-spacing:-0.21px;margin:0 0.10px 0 -0.10px">Local</span> <span style="letter-spacing:-0.25px;margin:0 0.12px 0 -0.12px">System</span></span>
<span class="t" style="left:187.31px;top:519.90px;color:#1b1b1b;transform:scaleX(0.9204)"><span style="letter-spacing:0.15px;margin:0 -0.08px 0 0.08px">Print</span> <span style="letter-spacing:0.09px;margin:0 -0.04px 0 0.04px">Spooler</span></span>
<span class="t" style="left:393.25px;top:519.90px;color:#1b1b1b;transform:scaleX(0.9278)"><span style="letter-spacing:-0.35px;margin:0 0.18px 0 -0.18px">This</span> <span style="letter-spacing:-0.21px;margin:0 0.10px 0 -0.10px">service</span> <span style="letter-spacing:0.07px;margin:0 -0.04px 0 0.04px">spools</span> <span style="letter-spacing:0.58px;margin:0 -0.29px 0 0.29px">print</span> <span style="letter-spacing:0.19px;margin:0 -0.10px 0 0.10px">jobs</span> <span style="letter-spacing:0.18px;margin:0 -0.09px 0 0.09px">and</span> <span style="letter-spacing:-0.00px;margin:0 0.00px 0 -0.00px">handles</span><span class="e">...</span></span>
<span class="t" style="left:688.20px;top:519.90px;color:#1b1b1b;transform:scaleX(0.9585)"><span style="letter-spacing:0.13px;margin:0 -0.06px 0 0.06px">Running</span></span>
<span class="t" style="left:770.01px;top:519.90px;color:#1b1b1b;transform:scaleX(0.9173)"><span style="letter-spacing:0.37px;margin:0 -0.18px 0 0.18px">Automatic</span></span>
<span class="t" style="left:886.33px;top:519.90px;color:#1b1b1b;transform:scaleX(0.9095)"><span style="letter-spacing:-0.21px;margin:0 0.10px 0 -0.10px">Local</span> <span style="letter-spacing:-0.25px;margin:0 0.12px 0 -0.12px">System</span></span>
<span class="t" style="left:187.32px;top:543.65px;color:#1b1b1b;transform:scaleX(0.9286)"><span style="letter-spacing:0.11px;margin:0 -0.06px 0 0.06px">Printer</span> <span style="letter-spacing:-0.22px;margin:0 0.11px 0 -0.11px">Extensions</span> <span style="letter-spacing:0.18px;margin:0 -0.09px 0 0.09px">and</span> <span style="letter-spacing:0.65px;margin:0 -0.32px 0 0.32px">Notifi</span><span class="e">...</span></span>
<span class="t" style="left:393.25px;top:543.65px;color:#1b1b1b;transform:scaleX(0.9211)"><span style="letter-spacing:-0.35px;margin:0 0.18px 0 -0.18px">This</span> <span style="letter-spacing:-0.21px;margin:0 0.10px 0 -0.10px">service</span> <span style="letter-spacing:0.08px;margin:0 -0.04px 0 0.04px">opens</span> <span style="letter-spacing:0.24px;margin:0 -0.12px 0 0.12px">custom</span> <span style="letter-spacing:0.42px;margin:0 -0.21px 0 0.21px">printer</span> <span style="letter-spacing:0.40px;margin:0 -0.20px 0 0.20px">dialog</span> <span class="e">...</span></span>
<span class="t" style="left:770.20px;top:543.65px;color:#1b1b1b;transform:scaleX(0.9474)"><span style="letter-spacing:0.23px;margin:0 -0.11px 0 0.11px">Manual</span></span>
<span class="t" style="left:886.33px;top:543.65px;color:#1b1b1b;transform:scaleX(0.9095)"><span style="letter-spacing:-0.21px;margin:0 0.10px 0 -0.10px">Local</span> <span style="letter-spacing:-0.25px;margin:0 0.12px 0 -0.12px">System</span></span>
<span class="t" style="left:187.30px;top:567.40px;color:#1b1b1b;transform:scaleX(0.9258)"><span style="letter-spacing:0.15px;margin:0 -0.08px 0 0.08px">PrintWorkflow_3ef4b62</span></span>
<span class="t" style="left:392.30px;top:567.40px;color:#1b1b1b;transform:scaleX(0.9260)"><span style="letter-spacing:-0.10px;margin:0 0.05px 0 -0.05px">Provides</span> <span style="letter-spacing:0.41px;margin:0 -0.21px 0 0.21px">support</span> <span style="letter-spacing:0.57px;margin:0 -0.28px 0 0.28px">for</span> <span style="letter-spacing:0.15px;margin:0 -0.08px 0 0.08px">Print</span> <span style="letter-spacing:0.46px;margin:0 -0.23px 0 0.23px">Workflow</span> <span style="letter-spacing:0.34px;margin:0 -0.17px 0 0.17px">appli</span><span class="e">...</span></span>
<span class="t" style="left:770.20px;top:567.40px;color:#1b1b1b;transform:scaleX(0.9474)"><span style="letter-spacing:0.23px;margin:0 -0.11px 0 0.11px">Manual</span></span>
<span class="t" style="left:886.33px;top:567.40px;color:#1b1b1b;transform:scaleX(0.9095)"><span style="letter-spacing:-0.21px;margin:0 0.10px 0 -0.10px">Local</span> <span style="letter-spacing:-0.25px;margin:0 0.12px 0 -0.12px">System</span></span>
<span class="t" style="left:187.34px;top:591.15px;color:#1b1b1b;transform:scaleX(0.9161)"><span style="letter-spacing:0.17px;margin:0 -0.08px 0 0.08px">Problem</span> <span style="letter-spacing:-0.03px;margin:0 0.01px 0 -0.01px">Reports</span> <span style="letter-spacing:0.31px;margin:0 -0.16px 0 0.16px">Control</span> <span style="letter-spacing:-0.99px;margin:0 0.50px 0 -0.50px">Pa</span><span class="e">...</span></span>
<span class="t" style="left:393.25px;top:591.15px;color:#1b1b1b;transform:scaleX(0.9218)"><span style="letter-spacing:-0.35px;margin:0 0.18px 0 -0.18px">This</span> <span style="letter-spacing:-0.21px;margin:0 0.10px 0 -0.10px">service</span> <span style="letter-spacing:0.17px;margin:0 -0.09px 0 0.09px">provides</span> <span style="letter-spacing:0.41px;margin:0 -0.21px 0 0.21px">support</span> <span style="letter-spacing:0.57px;margin:0 -0.28px 0 0.28px">for</span> <span style="letter-spacing:0.10px;margin:0 -0.05px 0 0.05px">viewing,</span> <span class="e">...</span></span>
<span class="t" style="left:770.20px;top:591.15px;color:#1b1b1b;transform:scaleX(0.9474)"><span style="letter-spacing:0.23px;margin:0 -0.11px 0 0.11px">Manual</span></span>
<span class="t" style="left:886.33px;top:591.15px;color:#1b1b1b;transform:scaleX(0.9095)"><span style="letter-spacing:-0.21px;margin:0 0.10px 0 -0.10px">Local</span> <span style="letter-spacing:-0.25px;margin:0 0.12px 0 -0.12px">System</span></span>
<span class="t" style="left:187.33px;top:614.90px;color:#1b1b1b;transform:scaleX(0.9216)"><span style="letter-spacing:0.13px;margin:0 -0.06px 0 0.06px">Program</span> <span style="letter-spacing:0.36px;margin:0 -0.18px 0 0.18px">Compatibility</span> <span style="letter-spacing:-0.55px;margin:0 0.27px 0 -0.27px">Assis</span><span class="e">...</span></span>
<span class="t" style="left:393.25px;top:614.90px;color:#1b1b1b;transform:scaleX(0.9203)"><span style="letter-spacing:-0.35px;margin:0 0.18px 0 -0.18px">This</span> <span style="letter-spacing:-0.21px;margin:0 0.10px 0 -0.10px">service</span> <span style="letter-spacing:0.17px;margin:0 -0.09px 0 0.09px">provides</span> <span style="letter-spacing:0.41px;margin:0 -0.21px 0 0.21px">support</span> <span style="letter-spacing:0.57px;margin:0 -0.28px 0 0.28px">for</span> <span style="letter-spacing:0.37px;margin:0 -0.19px 0 0.19px">the</span> <span style="letter-spacing:0.08px;margin:0 -0.04px 0 0.04px">Prog</span><span class="e">...</span></span>
<span class="t" style="left:688.20px;top:614.90px;color:#1b1b1b;transform:scaleX(0.9585)"><span style="letter-spacing:0.13px;margin:0 -0.06px 0 0.06px">Running</span></span>
<span class="t" style="left:770.20px;top:614.90px;color:#1b1b1b;transform:scaleX(0.9474)"><span style="letter-spacing:0.23px;margin:0 -0.11px 0 0.11px">Manual</span></span>
<span class="t" style="left:886.33px;top:614.90px;color:#1b1b1b;transform:scaleX(0.9095)"><span style="letter-spacing:-0.21px;margin:0 0.10px 0 -0.10px">Local</span> <span style="letter-spacing:-0.25px;margin:0 0.12px 0 -0.12px">System</span></span>
<span class="t" style="left:187.15px;top:638.65px;color:#1b1b1b;transform:scaleX(0.9281)"><span style="letter-spacing:0.22px;margin:0 -0.11px 0 0.11px">Quality</span> <span style="letter-spacing:0.23px;margin:0 -0.11px 0 0.11px">Windows</span> <span style="letter-spacing:0.41px;margin:0 -0.21px 0 0.21px">Audio</span> <span style="letter-spacing:0.31px;margin:0 -0.16px 0 0.16px">Vid</span><span class="e">...</span></span>
<span class="t" style="left:392.16px;top:638.65px;color:#1b1b1b;transform:scaleX(0.9215)"><span style="letter-spacing:0.22px;margin:0 -0.11px 0 0.11px">Quality</span> <span style="letter-spacing:0.23px;margin:0 -0.11px 0 0.11px">Windows</span> <span style="letter-spacing:0.41px;margin:0 -0.21px 0 0.21px">Audio</span> <span style="letter-spacing:0.26px;margin:0 -0.13px 0 0.13px">Video</span> <span style="letter-spacing:-0.23px;margin:0 0.12px 0 -0.12px">Experience</span> <span class="e">...</span></span>
<span class="t" style="left:770.20px;top:638.65px;color:#1b1b1b;transform:scaleX(0.9474)"><span style="letter-spacing:0.23px;margin:0 -0.11px 0 0.11px">Manual</span></span>
<span class="t" style="left:886.34px;top:638.65px;color:#1b1b1b;transform:scaleX(0.9047)"><span style="letter-spacing:-0.21px;margin:0 0.10px 0 -0.10px">Local</span> <span style="letter-spacing:-0.34px;margin:0 0.17px 0 -0.17px">Service</span></span>
<span class="t" style="left:187.32px;top:662.40px;color:#1b1b1b;transform:scaleX(0.9300)"><span style="letter-spacing:-0.09px;margin:0 0.04px 0 -0.04px">Radio</span> <span style="letter-spacing:0.29px;margin:0 -0.14px 0 0.14px">Management</span> <span style="letter-spacing:-0.34px;margin:0 0.17px 0 -0.17px">Service</span></span>
<span class="t" style="left:392.32px;top:662.40px;color:#1b1b1b;transform:scaleX(0.9275)"><span style="letter-spacing:-0.09px;margin:0 0.04px 0 -0.04px">Radio</span> <span style="letter-spacing:0.29px;margin:0 -0.14px 0 0.14px">Management</span> <span style="letter-spacing:0.18px;margin:0 -0.09px 0 0.09px">and</span> <span style="letter-spacing:0.16px;margin:0 -0.08px 0 0.08px">Airplane</span> <span style="letter-spacing:0.61px;margin:0 -0.30px 0 0.30px">Mode</span> <span style="letter-spacing:-1.91px;margin:0 0.95px 0 -0.95px">S</span><span class="e">...</span></span>
<span class="t" style="left:688.20px;top:662.40px;color:#1b1b1b;transform:scaleX(0.9585)"><span style="letter-spacing:0.13px;margin:0 -0.06px 0 0.06px">Running</span></span>
<span class="t" style="left:770.20px;top:662.40px;color:#1b1b1b;transform:scaleX(0.9474)"><span style="letter-spacing:0.23px;margin:0 -0.11px 0 0.11px">Manual</span></span>
<span class="t" style="left:886.34px;top:662.40px;color:#1b1b1b;transform:scaleX(0.9047)"><span style="letter-spacing:-0.21px;margin:0 0.10px 0 -0.10px">Local</span> <span style="letter-spacing:-0.34px;margin:0 0.17px 0 -0.17px">Service</span></span>
</body></html>
